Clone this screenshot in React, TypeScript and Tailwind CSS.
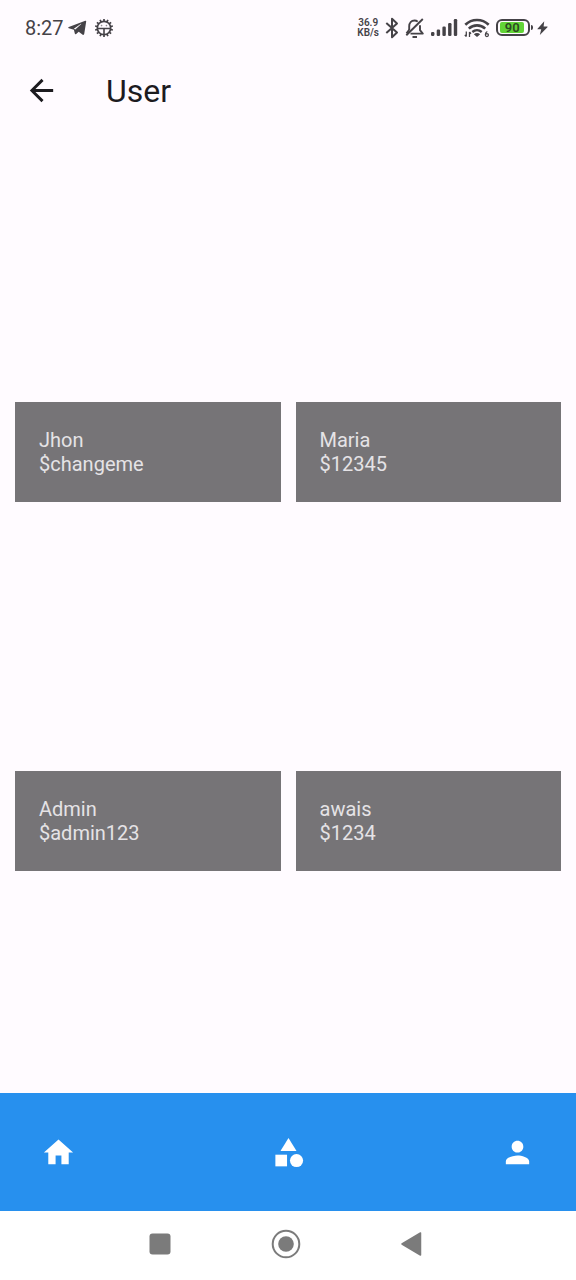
import React from "react";

type User = { name: string; password: string };

const users: User[] = [
  { name: "Jhon", password: "$changeme" },
  { name: "Maria", password: "$12345" },
  { name: "Admin", password: "$admin123" },
  { name: "awais", password: "$1234" },
];

function TelegramIcon() {
  return (
    <svg width="19" height="16" viewBox="0 0 19 16" fill="currentColor" aria-hidden="true">
      <path d="M17.300.8c.600-.2 1 .2.900.800l-2 12.500c-.1.700-.9 1-1.500.6l-4-2.900-2.500 2.100c-.6.500-1.200.300-1.400-.4L5.900 9.700.8 8.200c-.7-.2-.7-1 0-1.300zM7.300 9.600l6-5.600-.3-.2-7.200 5z" />
    </svg>
  );
}

function GearFaceIcon() {
  const teeth = Array.from({ length: 14 }, (_, i) => (i * 360) / 14);
  return (
    <svg width="20" height="20" viewBox="0 0 20 20" fill="none" stroke="currentColor" aria-hidden="true">
      <circle cx="10" cy="10" r="6.700" strokeWidth="1.700" />
      {teeth.map((angle) => (
        <path key={angle} d="M10 .9v2.400" strokeWidth="1.700" transform={`rotate(${angle} 10 10)`} />
      ))}
      <path d="M3.500 10.500h13M10 10.500v6" strokeWidth="1.600" />
      <circle cx="7.600" cy="7.600" r=".4" strokeWidth=".6" />
      <circle cx="12.400" cy="7.600" r=".4" strokeWidth=".6" />
    </svg>
  );
}

function BluetoothIcon() {
  return (
    <svg width="14" height="22" viewBox="0 0 14 22" fill="none" stroke="currentColor" strokeWidth="2" strokeLinejoin="round" aria-hidden="true">
      <path d="M1.300 6 12 15.600 7 20.200V1.800l5 4.600L1.300 16" />
    </svg>
  );
}

function MutedBellIcon() {
  return (
    <svg width="20" height="22" viewBox="0 0 20 22" fill="none" stroke="currentColor" strokeWidth="1.900" strokeLinejoin="round" aria-hidden="true">
      <path d="M4.200 13V9.300C4.200 5.800 6.400 3.500 9.500 3.500c1.300 0 2.400.4 3.200 1.100M15 8.200v5l2.800 3.400H5.500" />
      <path d="M17.800 2 1.300 18.300" />
      <path d="M4.200 12.700 1.500 16.400" />
      <path d="M7.500 20h4.500" strokeWidth="2" />
    </svg>
  );
}

function SignalIcon() {
  return (
    <svg width="27" height="18" viewBox="0 0 27 18" fill="currentColor" aria-hidden="true">
      <rect x="0" y="13" width="3.400" height="4" rx="1.200" />
      <rect x="5.700" y="10.500" width="3.400" height="6.500" rx="1.200" />
      <rect x="11.400" y="7.500" width="3.400" height="9.500" rx="1.200" />
      <rect x="17.100" y="4" width="3.400" height="13" rx="1.200" />
      <rect x="22.800" y="0" width="3.400" height="17" rx="1.200" />
    </svg>
  );
}

function WifiIcon() {
  return (
    <svg width="26" height="20" viewBox="0 0 26 20" fill="none" stroke="currentColor" aria-hidden="true">
      <path d="M1.300 6.800c6.500-6.400 16.900-6.400 23.400 0" strokeWidth="2.600" />
      <path d="M4.800 10.600c4.600-4.300 11.800-4.300 16.400 0" strokeWidth="2.600" />
      <path d="M8.300 14c2.700-2.400 6.700-2.400 9.400 0" strokeWidth="2.400" />
      <path d="M9.800 16.200c1.900-1.600 4.500-1.600 6.400 0L13 19z" fill="currentColor" stroke="none" />
      <path d="M2.300 13.500v5M.8 16.800l1.500 1.800M5.500 19v-5M7 15.700 5.500 14" strokeWidth="1.300" />
      <path d="M23.300 13.500c-1.300.6-1.900 1.800-1.900 3.200" strokeWidth="1.300" />
      <circle cx="22.900" cy="17.100" r="1.500" strokeWidth="1.300" />
    </svg>
  );
}

function Battery({ level }: { level: number }) {
  return (
    <div className="flex items-center gap-px">
      <div className="h-[17px] w-[34px] rounded-[6px] border-2 border-[#454247] p-px pl-[2px]">
        <div
          className="flex h-full items-center justify-center rounded-[2px] bg-[#62d437] text-[13px] leading-none font-semibold text-[#2d4a22]"
          style={{ width: `${level}%` }}
        >
          {level}
        </div>
      </div>
      <div className="h-[5px] w-[2px] rounded-r-sm bg-[#454247]" />
    </div>
  );
}

function BoltIcon() {
  return (
    <svg width="11" height="16" viewBox="0 0 12 16" fill="currentColor" aria-hidden="true">
      <path d="M7.900.5.600 8.700c-.3.300-.1.700.3.700h3.700L3.100 15.500 11.400 7.200c.3-.4.100-.8-.4-.8H7.200z" />
    </svg>
  );
}

function MaterialIcon({ children }: { children: React.ReactNode }) {
  return (
    <svg className="size-[35px]" viewBox="0 0 24 24" fill="currentColor" aria-hidden="true">
      {children}
    </svg>
  );
}

function StatusBar() {
  return (
    <div className="flex h-[55px] items-center justify-between pr-7 pl-[25px] text-[#454247]">
      <div className="flex items-center">
        <span className="mr-1 text-xl leading-6">8:27</span>
        <TelegramIcon />
        <span className="ml-[7px]">
          <GearFaceIcon />
        </span>
      </div>
      <div className="flex items-center gap-[6px]">
        <div className="text-center text-[10px] leading-[10px] font-semibold">
          <div>36.9</div>
          <div>KB/s</div>
        </div>
        <BluetoothIcon />
        <MutedBellIcon />
        <SignalIcon />
        <WifiIcon />
        <div className="flex items-center gap-1">
          <Battery level={90} />
          <BoltIcon />
        </div>
      </div>
    </div>
  );
}

function UserTile({ user }: { user: User }) {
  return (
    <li className="flex aspect-[3/4] flex-col justify-end">
      <div className="bg-[#767477] px-6 py-[26px] text-xl leading-6 text-[#e5e3e6]">
        <p>{user.name}</p>
        <p>{user.password}</p>
      </div>
    </li>
  );
}

export default function App() {
  return (
    <div className="flex min-h-screen flex-col bg-[#fffbff] font-['Roboto',sans-serif]">
      <StatusBar />
      <header className="flex h-[71px] items-center gap-[47px] px-6 text-[#1c1b1f]">
        <button type="button" aria-label="Back">
          <MaterialIcon>
            <path d="M20 11H7.830l5.590-5.590L12 4l-8 8 8 8 1.410-1.410L7.830 13H20z" />
          </MaterialIcon>
        </button>
        <h1 className="text-[32px] leading-[38px]">User</h1>
      </header>
      <main className="flex-1 px-[15px] pt-[22px] pb-4">
        <ul className="grid grid-cols-2 gap-[15px]">
          {users.map((user) => (
            <UserTile key={user.name} user={user} />
          ))}
        </ul>
      </main>
      <nav className="flex h-[118px] items-center justify-between bg-[#2790ee] px-[41px] text-white">
        <button type="button" aria-label="Home">
          <MaterialIcon>
            <path d="M10 20v-6h4v6h5v-8h3L12 3 2 12h3v8z" />
          </MaterialIcon>
        </button>
        <button type="button" aria-label="Categories">
          <MaterialIcon>
            <path d="M12 2l-5.500 9h11z" />
            <circle cx="17.500" cy="17.500" r="4.500" />
            <path d="M3 13.500h8v8H3z" />
          </MaterialIcon>
        </button>
        <button type="button" aria-label="Profile">
          <MaterialIcon>
            <path d="M12 12c2.210 0 4-1.790 4-4s-1.790-4-4-4-4 1.790-4 4 1.790 4 4 4zm0 2c-2.670 0-8 1.340-8 4v2h16v-2c0-2.660-5.330-4-8-4z" />
          </MaterialIcon>
        </button>
      </nav>
      <div className="flex h-[69px] items-center justify-center gap-24 bg-white pr-1 pb-[3px] text-[#7b7b7b]">
        <button type="button" aria-label="Recent apps">
          <svg width="30" height="30" viewBox="0 0 30 30" fill="currentColor" aria-hidden="true">
            <rect x="4.500" y="4.500" width="21" height="21" rx="3" />
          </svg>
        </button>
        <button type="button" aria-label="Home screen">
          <svg width="30" height="30" viewBox="0 0 30 30" fill="none" stroke="currentColor" aria-hidden="true">
            <circle cx="15" cy="15" r="13.300" strokeWidth="2" />
            <circle cx="15" cy="15" r="7.800" fill="currentColor" stroke="none" />
          </svg>
        </button>
        <button type="button" aria-label="Back one screen">
          <svg width="30" height="30" viewBox="0 0 30 30" fill="currentColor" stroke="currentColor" strokeWidth="1.500" strokeLinejoin="round" aria-hidden="true">
            <path d="M5 15 23.500 4v22z" />
          </svg>
        </button>
      </div>
    </div>
  );
}
